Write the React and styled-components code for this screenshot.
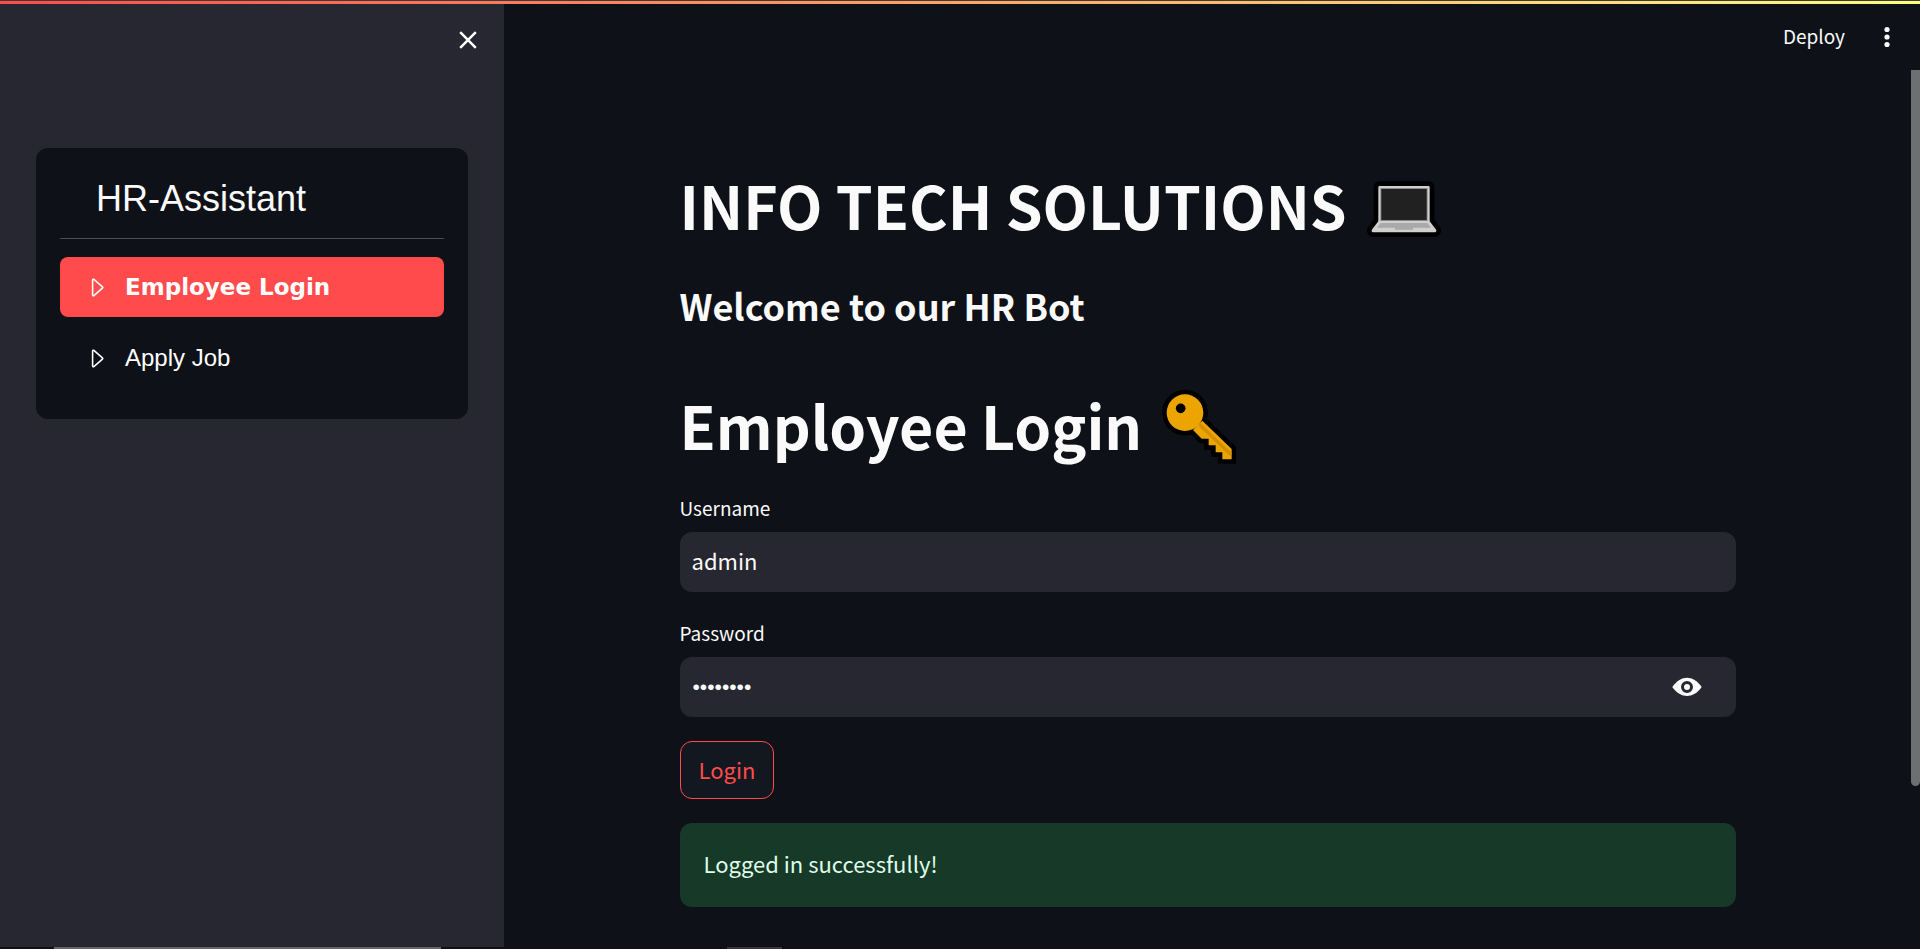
import React, { useState } from "react";
import styled, { createGlobalStyle } from "styled-components";
import { BsCaretRight } from "react-icons/bs";

const sans = '"Noto Sans CJK SC", "Noto Sans", sans-serif';
const arial = '"Liberation Sans", Arial, sans-serif';

const GlobalStyle = createGlobalStyle`
  * { box-sizing: border-box; }
  body {
    margin: 0;
    background: #0e1117;
    color: #fafafa;
    font-family: ${sans};
    font-size: 22px;
  }
  h1, h2, p { margin: 0; }
  button, input { font: inherit; color: inherit; }
  svg { display: block; }
`;

const Page = styled.div`
  min-height: 100vh;
  display: flex;
  flex-direction: column;
  border-top: 1px solid #3c3c3f;
`;

const Decoration = styled.div`
  height: 3px;
  background: linear-gradient(90deg, #ff4b4b, #fffd80);
`;

const Body = styled.div`
  flex: 1;
  display: flex;
`;

const Sidebar = styled.aside`
  width: 504px;
  flex: none;
  padding: 20px 36px;
  background: #262730;
`;

const SidebarTop = styled.div`
  display: flex;
  justify-content: flex-end;
  height: 124px;
`;

const IconButton = styled.button`
  display: flex;
  align-items: center;
  justify-content: center;
  width: 32px;
  height: 32px;
  padding: 0;
  border: 0;
  background: none;
  cursor: pointer;
`;

const CloseButton = styled(IconButton)`
  margin-right: -16px;
`;

const MenuCard = styled.nav`
  padding: 27px 24px 31px;
  border-radius: 12px;
  background: #0e1117;
  font-family: ${arial};
`;

const MenuTitle = styled.p`
  padding: 0 36px 15px;
  border-bottom: 1px solid #4b4d4f;
  font-size: 36px;
  line-height: 48px;
`;

const MenuList = styled.ul`
  display: flex;
  flex-direction: column;
  gap: 11px;
  margin: 18px 0 0;
  padding: 0;
  list-style: none;
`;

const MenuLink = styled.a`
  display: flex;
  align-items: center;
  gap: 16px;
  height: 60px;
  padding: 0 24px;
  border-radius: 8px;
  background: ${(p) => (p.$active ? "#ff4b4b" : "transparent")};
  color: #ffffff;
  font-family: ${(p) => (p.$active ? `"Arial Black", "DejaVu Sans", sans-serif` : arial)};
  font-size: ${(p) => (p.$active ? 23 : 24)}px;
  font-weight: ${(p) => (p.$active ? 900 : 400)};
  text-decoration: none;
`;

const Main = styled.main`
  flex: 1;
  display: flex;
  flex-direction: column;
`;

const Toolbar = styled.header`
  display: flex;
  align-items: center;
  justify-content: flex-end;
  gap: 26px;
  height: 66px;
  padding-right: 17px;
`;

const DeployButton = styled.button`
  padding: 0 0 2px;
  border: 0;
  background: none;
  font-size: 19px;
  line-height: 32px;
  cursor: pointer;
`;

const ScrollArea = styled.div`
  flex: 1;
  display: flex;
`;

const Content = styled.div`
  flex: 1;
  display: flex;
  justify-content: center;
  padding: 95px 24px 40px;
`;

const Column = styled.div`
  flex: 1;
  max-width: 1056px;
`;

const ScrollTrack = styled.div`
  width: 9px;
`;

const ScrollThumb = styled.div`
  height: calc(82% - 3px);
  border-radius: 0 0 5px 5px;
  background: #6e6f73;
`;

const Title = styled.h1`
  display: flex;
  align-items: flex-end;
  gap: 20px;
  font-size: 59px;
  font-weight: 700;
  line-height: 80px;

  svg { margin-bottom: 1px; }
`;

const Subtitle = styled.h2`
  margin: 36px 0 56px;
  font-size: 36px;
  font-weight: 600;
  line-height: 48px;
`;

const Form = styled.form`
  display: flex;
  flex-direction: column;
  align-items: flex-start;
  gap: 24px;
  margin-top: 26px;
`;

const Field = styled.div`
  width: 100%;
  display: flex;
  flex-direction: column;
  gap: 8px;
`;

const Label = styled.label`
  font-size: 19px;
  line-height: 33px;
`;

const InputBox = styled.div`
  display: flex;
  align-items: center;
  height: 60px;
  padding: 0 33px 0 12px;
  border-radius: 12px;
  background: #262730;
`;

const Input = styled.input`
  flex: 1;
  min-width: 0;
  height: 100%;
  padding: 0 0 4px;
  border: 0;
  outline: 0;
  background: none;

  &[type="password"] {
    padding: 0 1px;
    font-family: ${arial};
    font-size: 21px;
  }
`;

const LoginButton = styled.button`
  height: 58px;
  padding: 0 18px 3px;
  border: 1px solid #ff4b4b;
  border-radius: 12px;
  background: #131720;
  color: #ff4b4b;
  cursor: pointer;
`;

const Alert = styled.p`
  width: 100%;
  padding: 22px 24px 26px;
  border-radius: 12px;
  background: #173928;
  color: #dffde9;
  line-height: 36px;
`;

const Taskbar = styled.footer`
  display: flex;
  gap: 286px;
  height: 2px;
  padding-left: 54px;
  background: #120f10;
`;

const TaskbarMark = styled.span`
  width: ${(p) => p.$width}px;
  background: ${(p) => p.$color};
`;

const CloseIcon = () => (
  <svg width="20" height="20" viewBox="0 0 20 20" aria-hidden="true">
    <path d="M2.2 2.2 17.8 17.8M17.8 2.2 2.2 17.8" stroke="#fff" strokeWidth="2.5" />
  </svg>
);

const DotsIcon = () => (
  <svg width="32" height="32" viewBox="0 0 32 32" fill="#fafafa" aria-hidden="true">
    <circle cx="16" cy="8.5" r="2.6" />
    <circle cx="16" cy="16" r="2.6" />
    <circle cx="16" cy="23.5" r="2.6" />
  </svg>
);

const EyeIcon = () => (
  <svg width="30" height="20" viewBox="156 111 90 60" aria-hidden="true">
    <path
      d="M157 141C170 122 186 113 201 113S232 122 245 141C232 160 216 168 201 168S170 160 157 141Z"
      fill="#fafafa"
    />
    <circle cx="201" cy="141" r="13.5" fill="none" stroke="#262730" strokeWidth="9" />
  </svg>
);

const LaptopIcon = () => (
  <svg width="75" height="75" viewBox="78 27 225 225" role="img" aria-label="laptop">
    <path
      d="M116 78H262Q266 78 266 82V184L286 210Q287 217 280 217H98Q91 217 92 210L112 184V82Q112 78 116 78Z"
      fill="#000"
      stroke="#000"
      strokeWidth="28"
      strokeLinejoin="round"
    />
    <path
      d="M116 78H262Q266 78 266 82V184L286 210Q287 217 280 217H98Q91 217 92 210L112 184V82Q112 78 116 78Z"
      fill="#cfcfcf"
    />
    <path d="M118 84H260V183H118Z" fill="#8b8b8b" />
    <path d="M121 87H257V180H121Z" fill="#212121" />
    <path d="M119 189H259L270 203H216V209H162V203H108Z" fill="#a9a9a9" />
  </svg>
);

const KeyIcon = () => (
  <svg width="75" height="75" viewBox="39 27 225 225" role="img" aria-label="key">
    <g fill="#000" stroke="#000" strokeWidth="27">
      <circle cx="108" cy="98" r="55" />
      <path d="M160 122 248 207V238H220V217H200V196H179V176H158L132 150Z" />
    </g>
    <circle cx="108" cy="98" r="55" fill="#eba400" />
    <path d="M160 122 248 207V238H220V217H200V196H179V176H158L132 150Z" fill="#eba400" />
    <path d="M152 134 246 224" stroke="#d48c00" strokeWidth="10" />
    <circle cx="95" cy="85" r="14.5" fill="#000" />
  </svg>
);

const menuItems = ["Employee Login", "Apply Job"];

export default function App() {
  const [active, setActive] = useState(menuItems[0]);
  const [username, setUsername] = useState("admin");
  const [password, setPassword] = useState("admin123");
  const [visible, setVisible] = useState(false);

  return (
    <>
      <GlobalStyle />
      <Page>
        <Decoration />
        <Body>
          <Sidebar>
            <SidebarTop>
              <CloseButton type="button" aria-label="Close sidebar">
                <CloseIcon />
              </CloseButton>
            </SidebarTop>
            <MenuCard>
              <MenuTitle>HR-Assistant</MenuTitle>
              <MenuList>
                {menuItems.map((item) => (
                  <li key={item}>
                    <MenuLink href="#" $active={item === active} onClick={() => setActive(item)}>
                      <BsCaretRight size={25} />
                      {item}
                    </MenuLink>
                  </li>
                ))}
              </MenuList>
            </MenuCard>
          </Sidebar>
          <Main>
            <Toolbar>
              <DeployButton type="button">Deploy</DeployButton>
              <IconButton type="button" aria-label="Main menu">
                <DotsIcon />
              </IconButton>
            </Toolbar>
            <ScrollArea>
              <Content>
                <Column>
                  <Title>
                    INFO TECH SOLUTIONS <LaptopIcon />
                  </Title>
                  <Subtitle>Welcome to our HR Bot</Subtitle>
                  <Title>
                    Employee Login <KeyIcon />
                  </Title>
                  <Form onSubmit={(e) => e.preventDefault()}>
                    <Field>
                      <Label htmlFor="username">Username</Label>
                      <InputBox>
                        <Input
                          id="username"
                          value={username}
                          onChange={(e) => setUsername(e.target.value)}
                        />
                      </InputBox>
                    </Field>
                    <Field>
                      <Label htmlFor="password">Password</Label>
                      <InputBox>
                        <Input
                          id="password"
                          type={visible ? "text" : "password"}
                          value={password}
                          onChange={(e) => setPassword(e.target.value)}
                        />
                        <IconButton
                          type="button"
                          aria-label="Show password"
                          onClick={() => setVisible(!visible)}
                        >
                          <EyeIcon />
                        </IconButton>
                      </InputBox>
                    </Field>
                    <LoginButton type="submit">Login</LoginButton>
                    <Alert role="status">Logged in successfully!</Alert>
                  </Form>
                </Column>
              </Content>
              <ScrollTrack>
                <ScrollThumb />
              </ScrollTrack>
            </ScrollArea>
          </Main>
        </Body>
        <Taskbar>
          <TaskbarMark $width={387} $color="#6b6363" />
          <TaskbarMark $width={55} $color="#393638" />
        </Taskbar>
      </Page>
    </>
  );
}
